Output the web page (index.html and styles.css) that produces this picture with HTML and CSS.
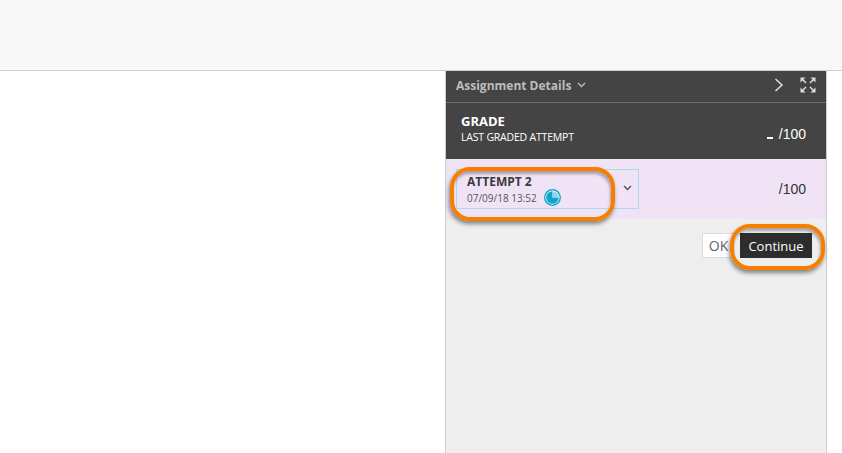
FILE: index.html
```html
<!DOCTYPE html>
<html lang="en">
<head>
<meta charset="utf-8">
<title>Assignment Details</title>
<link rel="stylesheet" href="styles.css">
</head>
<body>
<div class="top"></div>
<div class="main">
  <div class="canvas"></div>
  <aside class="panel">
    <div class="panel-head">
      <span class="details">Assignment Details</span>
      <svg class="caret" width="9" height="6" viewBox="0 0 9 6"><path d="M1 1l3.5 3.5L8 1" fill="none" stroke="#bdbdbd" stroke-width="1.3"/></svg>
      <svg class="next" width="10" height="14" viewBox="0 0 10 14"><path d="M1.500 1l6.500 6-6.500 6" fill="none" stroke="#e0e0e0" stroke-width="1.500"/></svg>
      <svg class="expand" width="16" height="16" viewBox="0 0 16 16"><g fill="#dcdcdc"><path d="M0.500 0.500h5l-5 5zM15.500 0.500v5l-5-5zM0.500 15.500v-5l5 5zM15.500 15.500h-5l5-5z"/></g><path d="M2 2l4 4M14 2l-4 4M2 14l4-4M14 14l-4-4" stroke="#dcdcdc" stroke-width="1.500" fill="none"/></svg>
    </div>
    <div class="grade">
      <div>
        <div class="grade-title">GRADE</div>
        <div class="grade-sub">LAST GRADED ATTEMPT</div>
      </div>
      <div class="grade-score"><span class="dash"></span>/100</div>
    </div>
    <div class="attempt">
      <div class="attempt-box">
        <div class="attempt-text">
          <div class="attempt-title">ATTEMPT 2</div>
          <div class="attempt-date">07/09/18 13:52
            <svg class="clock" width="17" height="17" viewBox="0 0 17 17"><circle cx="8.500" cy="8.500" r="7.800" fill="#dff4fa" stroke="#0f9fc6" stroke-width="1.300"/><path d="M8.500 8.500V2.200a6.300 6.300 0 1 0 6.300 6.300z" fill="#12a5cc"/><path d="M8.500 8.500V2.200a6.300 6.300 0 0 1 6.300 6.300z" fill="#8fd8ea"/></svg>
          </div>
        </div>
        <svg class="attempt-caret" width="9" height="6" viewBox="0 0 9 6"><path d="M1 1l3.500 3.500L8 1" fill="none" stroke="#555" stroke-width="1.500"/></svg>
      </div>
      <div class="attempt-score">/100</div>
    </div>
    <div class="actions">
      <button class="btn-ok">OK</button>
      <button class="btn-continue">Continue</button>
    </div>
  </aside>
</div>
<div class="ring ring-attempt"></div>
<div class="ring ring-continue"></div>
</body>
</html>
```
FILE: styles.css
```css
* { box-sizing: border-box; }
html, body { margin: 0; height: 100%; overflow: hidden; }
body { background: #fff; font-family: "Open Sans", sans-serif; position: relative; }
.top { height: 71px; background: #f8f8f8; border-bottom: 1px solid #d0d0d0; }
.main { display: flex; height: 382px; }
.canvas { width: 445px; background: #fff; }
.panel { width: 382px; background: #eee; border-left: 1px solid #cdcdcd; border-right: 1px solid #cdcdcd; }
.panel-head { height: 32px; background: #444; border-bottom: 1px solid #6e6e6e; display: flex; align-items: center; padding: 0 10px 3px; color: #bdbdbd; }
.details { font-size: 12px; font-weight: 700; }
.caret { margin-left: 6px; }
.next { margin-left: auto; margin-right: 16px; }
.grade { height: 56px; background: #444; color: #fff; display: flex; justify-content: space-between; padding: 10px 20px 0 15px; }
.grade-title { font-size: 13px; font-weight: 700; line-height: 16px; }
.grade-sub { font-size: 10.500px; line-height: 13px; margin-top: 2px; letter-spacing: -0.2px; }
.grade-score { font-family: "Liberation Sans", sans-serif; font-size: 14px; padding-top: 13px; display: flex; align-items: flex-start; }
.dash { width: 6px; height: 2px; background: #fff; margin: 11px 6px 0 0; }
.attempt { height: 60px; background: #f1e3f6; padding: 10px 20px 0 10px; display: flex; justify-content: space-between; }
.attempt-box { width: 183px; height: 40px; border: 1px solid #a9dbe9; display: flex; align-items: center; padding: 2px 0 0 10px; }
.attempt-text { width: 156px; }
.attempt-title { font-size: 12px; font-weight: 700; color: #3a3a3a; line-height: 15px; }
.attempt-date { font-size: 10px; color: #555; line-height: 18px; display: flex; align-items: center; gap: 7px; }
.attempt-caret { margin-top: -5px; }
.attempt-score { font-family: "Liberation Sans", sans-serif; font-size: 14px; color: #333; padding-top: 12px; }
.actions { display: flex; justify-content: flex-end; gap: 5px; padding: 14px 14px 0 0; }
.btn-ok { width: 33px; height: 25px; background: #fff; border: 1px solid #ddd; font: 14px "Open Sans", sans-serif; color: #5a6470; padding: 0; }
.btn-continue { width: 72px; height: 25px; background: #2d2d2d; border: 0; color: #fff; font: 13px "Open Sans", sans-serif; padding: 0; }
.ring { position: absolute; border: 4px solid #f77f00; border-radius: 20px; box-shadow: -1px 3px 4px rgba(0,0,0,.45), inset -1px 3px 3px rgba(0,0,0,.3); }
.ring-attempt { left: 450px; top: 167px; width: 165px; height: 54px; }
.ring-continue { left: 730px; top: 224px; width: 95px; height: 46px; }
```
